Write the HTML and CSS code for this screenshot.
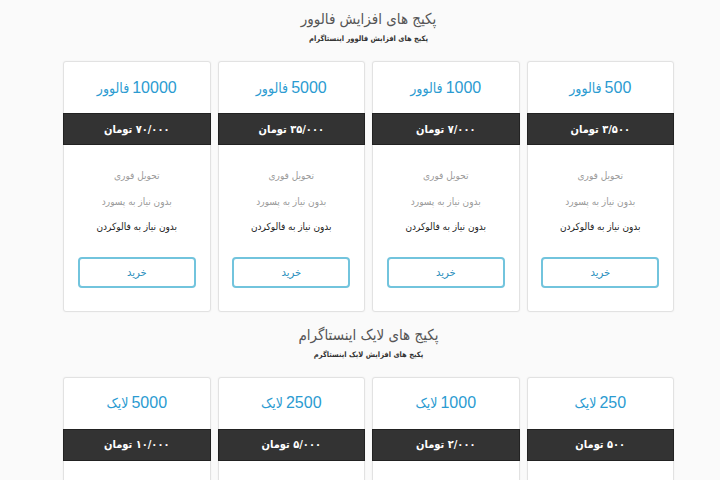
FILE: index.html
```html
<!DOCTYPE html>
<html lang="fa" dir="rtl">
<head>
<meta charset="utf-8">
<title>پکیج ها</title>
<link rel="stylesheet" href="styles.css">
</head>
<body>
<main class="page">
  <section class="pack pack-first">
    <h2 class="pack-title">پکیج های افزایش فالوور</h2>
    <p class="pack-sub">پکیج های افزایش فالوور اینستاگرام</p>
    <div class="cards">
      <div class="card">
        <div class="card-head"><span class="num">500</span><span class="word">فالوور</span></div>
        <div class="card-price">۳/۵۰۰ تومان</div>
        <ul class="card-list">
          <li class="muted">تحویل فوری</li>
          <li class="muted">بدون نیاز به پسورد</li>
          <li class="strong">بدون نیاز به فالوکردن</li>
        </ul>
        <a class="buy" href="#">خرید</a>
      </div>
      <div class="card">
        <div class="card-head"><span class="num">1000</span><span class="word">فالوور</span></div>
        <div class="card-price">۷/۰۰۰ تومان</div>
        <ul class="card-list">
          <li class="muted">تحویل فوری</li>
          <li class="muted">بدون نیاز به پسورد</li>
          <li class="strong">بدون نیاز به فالوکردن</li>
        </ul>
        <a class="buy" href="#">خرید</a>
      </div>
      <div class="card">
        <div class="card-head"><span class="num">5000</span><span class="word">فالوور</span></div>
        <div class="card-price">۳۵/۰۰۰ تومان</div>
        <ul class="card-list">
          <li class="muted">تحویل فوری</li>
          <li class="muted">بدون نیاز به پسورد</li>
          <li class="strong">بدون نیاز به فالوکردن</li>
        </ul>
        <a class="buy" href="#">خرید</a>
      </div>
      <div class="card">
        <div class="card-head"><span class="num">10000</span><span class="word">فالوور</span></div>
        <div class="card-price">۷۰/۰۰۰ تومان</div>
        <ul class="card-list">
          <li class="muted">تحویل فوری</li>
          <li class="muted">بدون نیاز به پسورد</li>
          <li class="strong">بدون نیاز به فالوکردن</li>
        </ul>
        <a class="buy" href="#">خرید</a>
      </div>
    </div>
  </section>
  <section class="pack">
    <h2 class="pack-title">پکیج های لایک اینستاگرام</h2>
    <p class="pack-sub">پکیج های افزایش لایک اینستاگرم</p>
    <div class="cards">
      <div class="card">
        <div class="card-head"><span class="num">250</span><span class="word">لایک</span></div>
        <div class="card-price">۵۰۰ تومان</div>
      </div>
      <div class="card">
        <div class="card-head"><span class="num">1000</span><span class="word">لایک</span></div>
        <div class="card-price">۲/۰۰۰ تومان</div>
      </div>
      <div class="card">
        <div class="card-head"><span class="num">2500</span><span class="word">لایک</span></div>
        <div class="card-price">۵/۰۰۰ تومان</div>
      </div>
      <div class="card">
        <div class="card-head"><span class="num">5000</span><span class="word">لایک</span></div>
        <div class="card-price">۱۰/۰۰۰ تومان</div>
      </div>
    </div>
  </section>
</main>
</body>
</html>
```
FILE: styles.css
```css
* { box-sizing: border-box; }
html, body {
  margin: 0;
  padding: 0;
  height: 100%;
  overflow: hidden;
}
body {
  background: #fafafa;
  font-family: "DejaVu Sans Condensed", "DejaVu Sans", "Liberation Sans", sans-serif;
  color: #333;
}
.page {
  margin: 0 46px 0 63px;
}
.pack {
  padding-top: 11px;
}
.pack-first {
  padding-top: 7px;
}
.pack-title {
  margin: 0;
  text-align: center;
  font-size: 15px;
  line-height: 24px;
  font-weight: normal;
  color: #555;
}
.pack-sub {
  margin: 0;
  text-align: center;
  font-size: 7.5px;
  line-height: 16px;
  font-weight: bold;
  color: #333;
}
.cards {
  margin-top: 14px;
  display: grid;
  grid-template-columns: repeat(4, 1fr);
  gap: 7px;
}
.card {
  background: #fff;
  border: 1px solid #e2e2e2;
  border-radius: 3px;
  box-shadow: 0 0 2px rgba(0,0,0,0.06);
  display: flex;
  flex-direction: column;
  align-items: center;
  padding-bottom: 23px;
}
.card-head {
  height: 51px;
  display: flex;
  align-items: center;
  justify-content: center;
  gap: 3px;
  font-size: 16px;
  color: #2b9bd1;
}
.card-head .num {
  font-family: "Liberation Sans", sans-serif;
}
.card-head .word {
  font-size: 14px;
}
.card-price {
  align-self: stretch;
  margin: 0 -1px;
  height: 32px;
  background: #333;
  border: 1px solid #222;
  color: #fff;
  font-weight: bold;
  font-size: 11px;
  display: flex;
  align-items: center;
  justify-content: center;
}
.card-list {
  list-style: none;
  margin: 0;
  padding: 18px 0 0;
  text-align: center;
  font-size: 10px;
  line-height: 25.5px;
}
.card-list .muted { color: #9a9a9a; }
.card-list .strong { color: #222; }
.buy {
  margin-top: 17px;
  width: 118px;
  height: 31px;
  border: 2px solid #72c4dd;
  border-radius: 4px;
  display: flex;
  align-items: center;
  justify-content: center;
  text-decoration: none;
  color: #2a8fbd;
  font-size: 11px;
}
```
